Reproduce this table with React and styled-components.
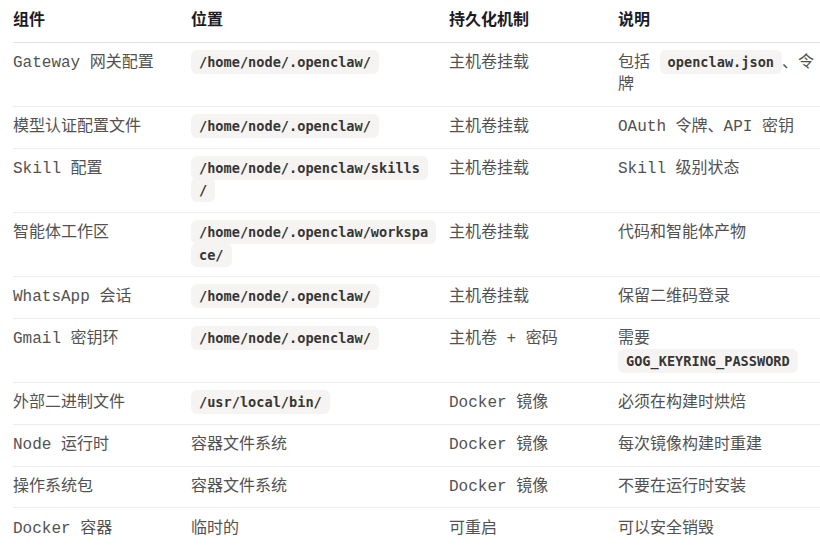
import styled, { createGlobalStyle } from "styled-components";

const GlobalStyle = createGlobalStyle`
  html, body {
    margin: 0;
    padding: 0;
    background: #ffffff;
  }
  body {
    font-family: "Liberation Mono", "Noto Sans CJK SC", monospace;
    font-size: 16px;
    line-height: 22.5px;
    color: #525252;
  }
`;

const Table = styled.table`
  width: 807px;
  margin-left: 13px;
  border-collapse: collapse;
  table-layout: fixed;
`;

const HeadCell = styled.th`
  text-align: left;
  vertical-align: top;
  padding: 9.5px 16px 9.5px 0;
  font-weight: 700;
  color: #1b1b26;
  border-bottom: 1px solid #e2e2e2;
  &:last-child {
    padding-right: 0;
  }
`;

const Row = styled.tr`
  border-bottom: 1px solid #f0ebec;
  &:last-child {
    border-bottom: none;
  }
`;

const Cell = styled.td`
  vertical-align: top;
  padding: 9.25px 16px 9px 0;
  overflow-wrap: anywhere;
  &:last-child {
    padding-right: 0;
  }
`;

const Code = styled.code`
  font-family: "DejaVu Sans Mono", monospace;
  font-size: 13.6px;
  font-weight: 600;
  line-height: 0;
  color: #363636;
  background: #f6f4f2;
  border-radius: 6px;
  padding: 4px 8px;
  -webkit-box-decoration-break: clone;
  box-decoration-break: clone;
  overflow-wrap: anywhere;
`;

const rows = [
  {
    name: "Gateway 网关配置",
    place: <Code>/home/node/.openclaw/</Code>,
    keep: "主机卷挂载",
    note: (
      <>
        包括 <Code>openclaw.json</Code>、令牌
      </>
    ),
  },
  {
    name: "模型认证配置文件",
    place: <Code>/home/node/.openclaw/</Code>,
    keep: "主机卷挂载",
    note: "OAuth 令牌、API 密钥",
  },
  {
    name: "Skill 配置",
    place: <Code>/home/node/.openclaw/skills/</Code>,
    keep: "主机卷挂载",
    note: "Skill 级别状态",
  },
  {
    name: "智能体工作区",
    place: <Code>/home/node/.openclaw/workspace/</Code>,
    keep: "主机卷挂载",
    note: "代码和智能体产物",
  },
  {
    name: "WhatsApp 会话",
    place: <Code>/home/node/.openclaw/</Code>,
    keep: "主机卷挂载",
    note: "保留二维码登录",
  },
  {
    name: "Gmail 密钥环",
    place: <Code>/home/node/.openclaw/</Code>,
    keep: "主机卷 + 密码",
    note: (
      <>
        需要 <Code>GOG_KEYRING_PASSWORD</Code>
      </>
    ),
  },
  {
    name: "外部二进制文件",
    place: <Code>/usr/local/bin/</Code>,
    keep: "Docker 镜像",
    note: "必须在构建时烘焙",
  },
  {
    name: "Node 运行时",
    place: "容器文件系统",
    keep: "Docker 镜像",
    note: "每次镜像构建时重建",
  },
  {
    name: "操作系统包",
    place: "容器文件系统",
    keep: "Docker 镜像",
    note: "不要在运行时安装",
  },
  {
    name: "Docker 容器",
    place: "临时的",
    keep: "可重启",
    note: "可以安全销毁",
  },
];

const App = () => {
  return (
    <>
      <GlobalStyle />
      <Table>
        <colgroup>
          <col style={{ width: 178 }} />
          <col style={{ width: 258 }} />
          <col style={{ width: 169 }} />
          <col />
        </colgroup>
        <thead>
          <tr>
            <HeadCell>组件</HeadCell>
            <HeadCell>位置</HeadCell>
            <HeadCell>持久化机制</HeadCell>
            <HeadCell>说明</HeadCell>
          </tr>
        </thead>
        <tbody>
          {rows.map((row, i) => (
            <Row key={i}>
              <Cell>{row.name}</Cell>
              <Cell>{row.place}</Cell>
              <Cell>{row.keep}</Cell>
              <Cell>{row.note}</Cell>
            </Row>
          ))}
        </tbody>
      </Table>
    </>
  );
};

export default App;
